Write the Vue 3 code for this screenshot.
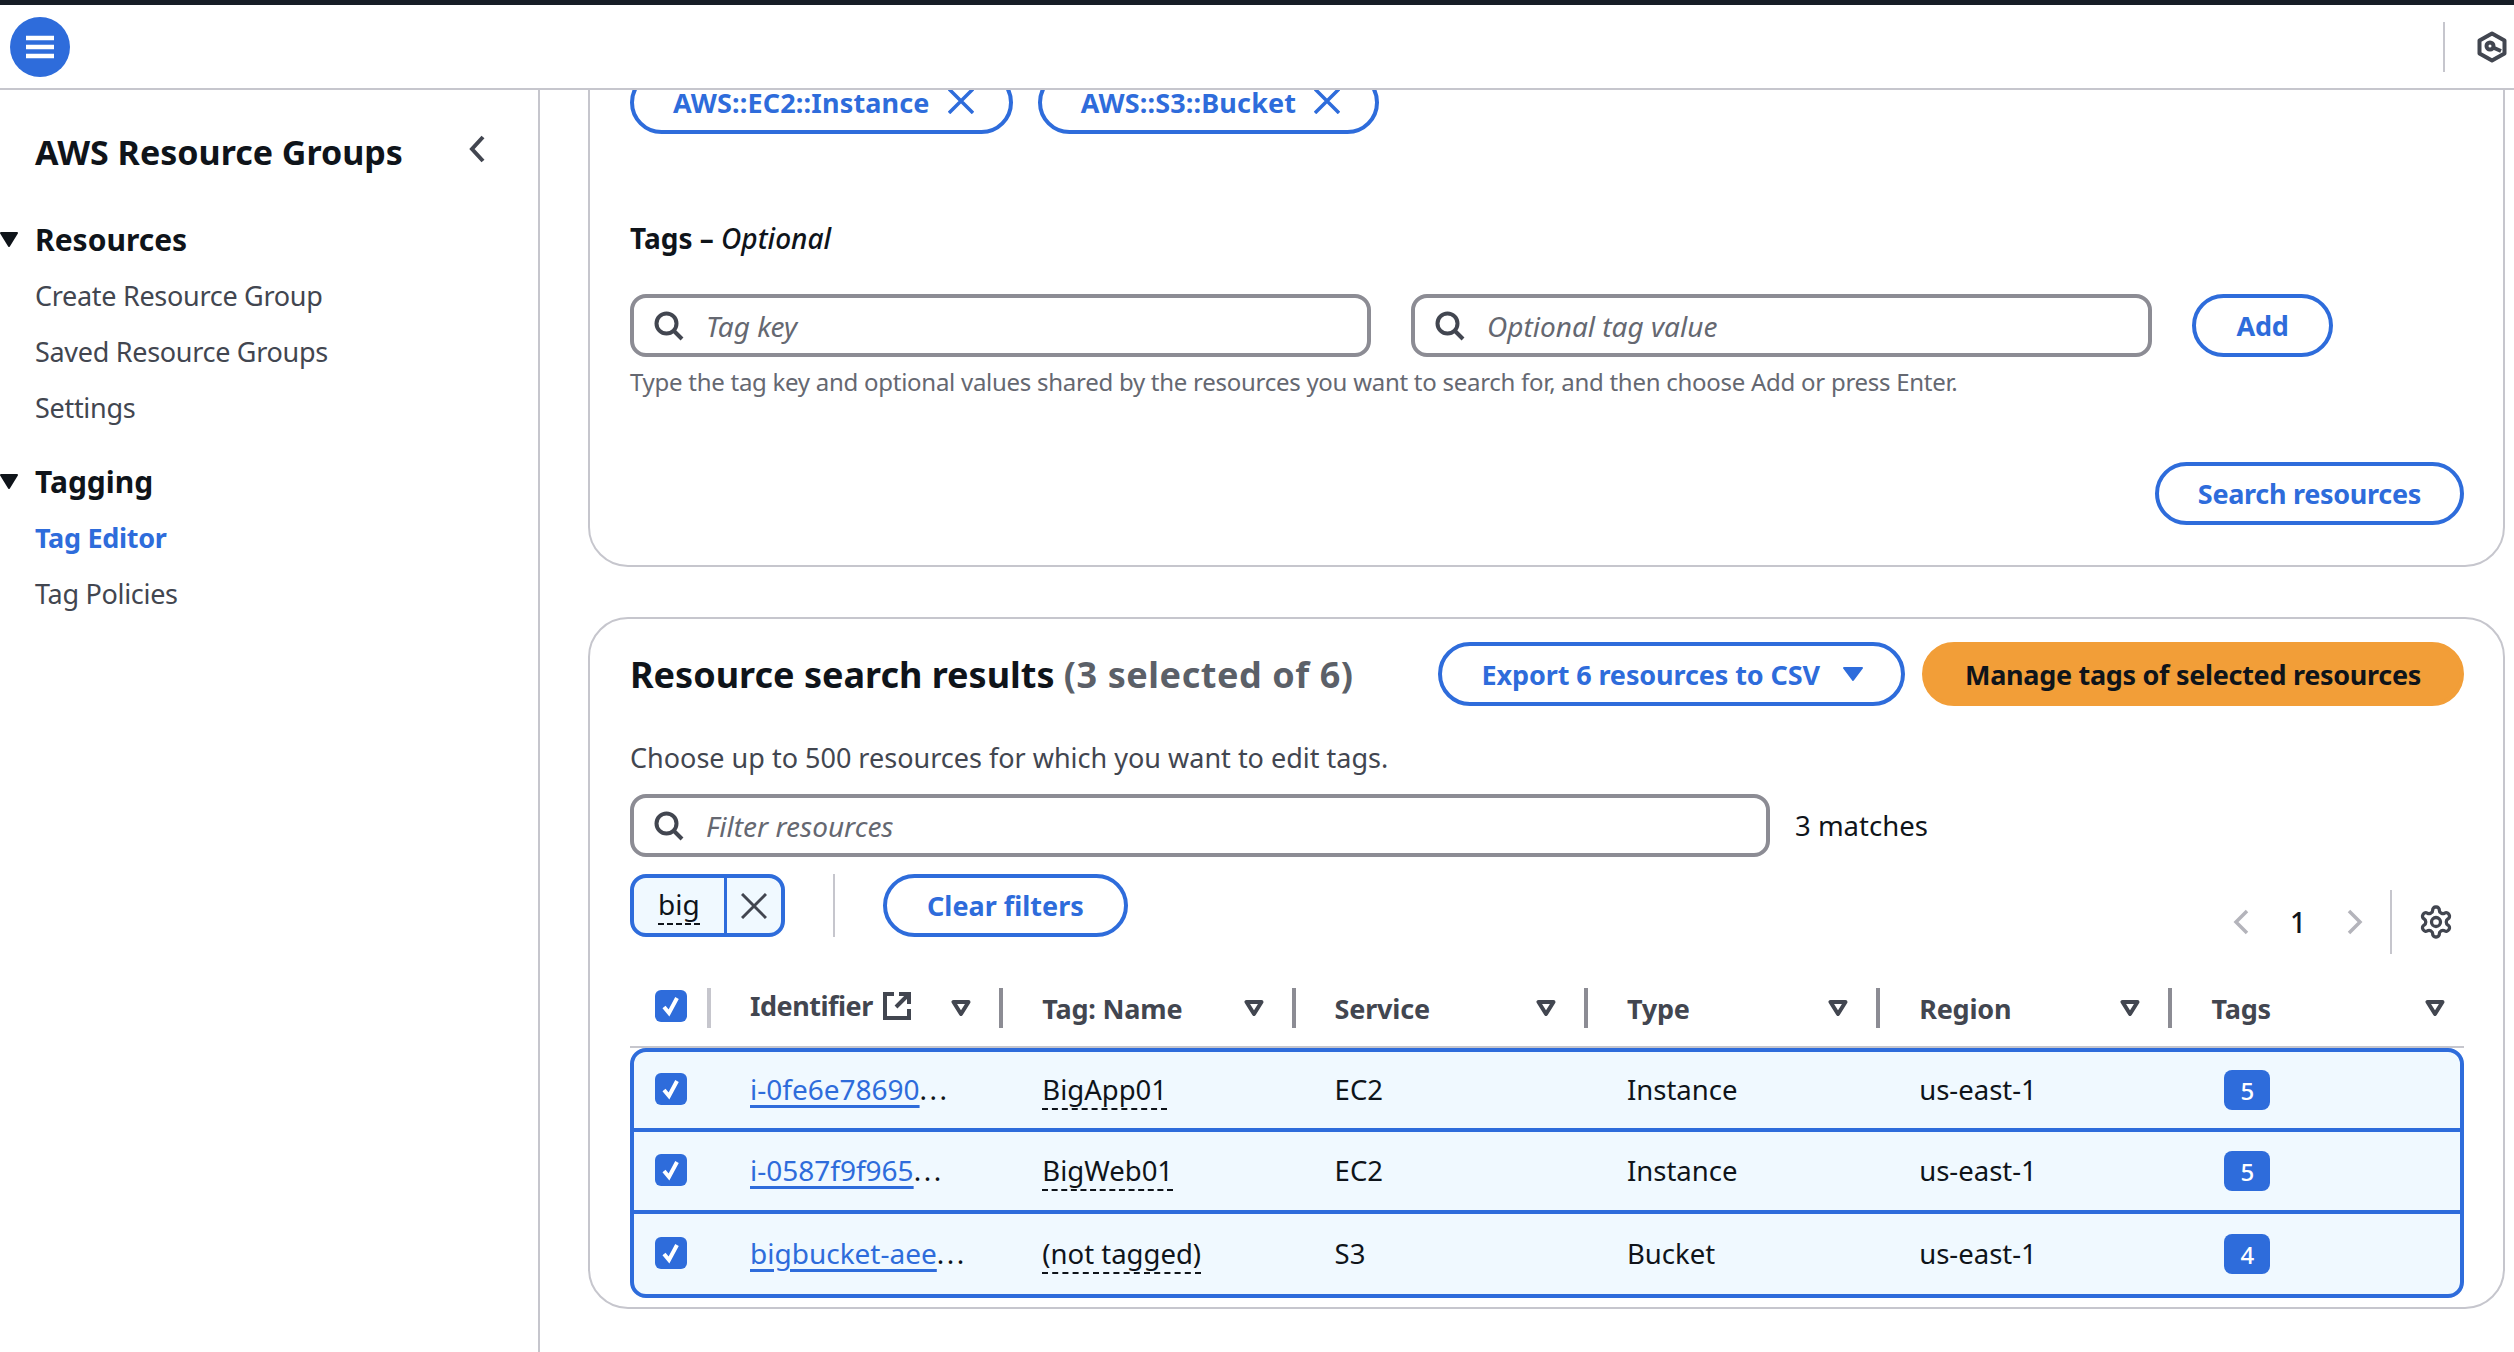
<script setup>
import { ref } from "vue";

const nav = ref([
  { title: "Resources", links: [{ label: "Create Resource Group" }, { label: "Saved Resource Groups" }, { label: "Settings" }] },
  { title: "Tagging", links: [{ label: "Tag Editor", active: true }, { label: "Tag Policies" }] },
]);

const columns = ["Tag: Name", "Service", "Type", "Region", "Tags"];

const rows = ref([
  { id: "i-0fe6e78690", name: "BigApp01", service: "EC2", type: "Instance", region: "us-east-1", tags: 5 },
  { id: "i-0587f9f965", name: "BigWeb01", service: "EC2", type: "Instance", region: "us-east-1", tags: 5 },
  { id: "bigbucket-aee", name: "(not tagged)", service: "S3", type: "Bucket", region: "us-east-1", tags: 4 },
]);
</script>

<template>
  <div class="app">
    <div class="topline"></div>
    <header class="header">
      <div class="menu-btn">
        <svg width="28" height="24" viewBox="0 0 28 24"><path d="M0 3h28M0 12h28M0 21h28" stroke="#fff" stroke-width="4.5" /></svg>
      </div>
      <div class="header-right">
        <svg width="30" height="32" viewBox="0 0 30 32" fill="none" stroke="#424650" stroke-width="4" stroke-linejoin="round">
          <path d="M15 2.500l12.500 7v13l-12.500 7-12.500-7v-13z" />
          <circle cx="13" cy="15" r="3.500" />
          <path d="M16 16.500l8 3.500" />
        </svg>
      </div>
    </header>

    <div class="body">
      <aside class="sidebar">
        <div class="side-title">
          <span>AWS Resource Groups</span>
          <svg class="side-close" width="18" height="28" viewBox="0 0 18 28" fill="none" stroke="#424650" stroke-width="4"><path d="M15 2L4 14l11 12" /></svg>
        </div>
        <div class="side-section" v-for="section in nav" :key="section.title">
          <div class="side-head">
            <svg width="18" height="15" viewBox="0 0 18 15"><path d="M1 1h16L9 14z" fill="#0f141a" stroke="#0f141a" stroke-width="2" stroke-linejoin="round" /></svg>
            <span>{{ section.title }}</span>
          </div>
          <div class="side-link" :class="{ active: link.active }" v-for="link in section.links" :key="link.label">{{ link.label }}</div>
        </div>
      </aside>

      <main class="content">
        <section class="card card-search">
          <div class="chips">
            <div class="btn chip">
              AWS::EC2::Instance
              <svg class="x" width="26" height="26" viewBox="0 0 26 26"><path d="M1 1l24 24M25 1L1 25" stroke="#2e6cdb" stroke-width="3.500" /></svg>
            </div>
            <div class="btn chip">
              AWS::S3::Bucket
              <svg class="x" width="26" height="26" viewBox="0 0 26 26"><path d="M1 1l24 24M25 1L1 25" stroke="#2e6cdb" stroke-width="3.500" /></svg>
            </div>
          </div>
          <div class="tags-label">Tags – <em>Optional</em></div>
          <div class="tag-inputs">
            <div class="input">
              <svg width="30" height="30" viewBox="0 0 30 30" fill="none" stroke="#424650" stroke-width="4"><circle cx="12.500" cy="12.500" r="10" /><path d="M19.500 19.500L28 28" /></svg>
              <span>Tag key</span>
            </div>
            <div class="input">
              <svg width="30" height="30" viewBox="0 0 30 30" fill="none" stroke="#424650" stroke-width="4"><circle cx="12.500" cy="12.500" r="10" /><path d="M19.500 19.500L28 28" /></svg>
              <span>Optional tag value</span>
            </div>
            <div class="btn add">Add</div>
          </div>
          <div class="hint">Type the tag key and optional values shared by the resources you want to search for, and then choose Add or press Enter.</div>
          <div class="search-row">
            <div class="btn">Search resources</div>
          </div>
        </section>

        <section class="card card-results">
          <div class="results-head">
            <h2>Resource search results <span>(3 selected of 6)</span></h2>
            <div class="head-actions">
              <div class="btn export">
                Export 6 resources to CSV
                <svg width="22" height="16" viewBox="0 0 22 16"><path d="M2 2h18L11 14z" fill="#2e6cdb" stroke="#2e6cdb" stroke-width="2" stroke-linejoin="round" /></svg>
              </div>
              <div class="btn primary">Manage tags of selected resources</div>
            </div>
          </div>
          <p class="desc">Choose up to 500 resources for which you want to edit tags.</p>
          <div class="filter-row">
            <div class="input filter">
              <svg width="30" height="30" viewBox="0 0 30 30" fill="none" stroke="#424650" stroke-width="4"><circle cx="12.500" cy="12.500" r="10" /><path d="M19.500 19.500L28 28" /></svg>
              <span>Filter resources</span>
            </div>
            <div class="matches">3 matches</div>
          </div>
          <div class="toolbar">
            <div class="token">
              <div class="token-text"><span>big</span></div>
              <div class="token-x">
                <svg width="26" height="26" viewBox="0 0 26 26"><path d="M1 1l24 24M25 1L1 25" stroke="#424650" stroke-width="3" /></svg>
              </div>
            </div>
            <div class="tool-sep"></div>
            <div class="btn clear">Clear filters</div>
            <div class="pager">
              <svg width="16" height="26" viewBox="0 0 16 26" fill="none" stroke="#b4b4bb" stroke-width="3.500"><path d="M14 2L3 13l11 11" /></svg>
              <span class="page-num">1</span>
              <svg width="16" height="26" viewBox="0 0 16 26" fill="none" stroke="#b4b4bb" stroke-width="3.500"><path d="M2 2l11 11L2 24" /></svg>
              <div class="pager-sep"></div>
              <svg width="36" height="36" viewBox="0 0 24 24" fill="none" stroke="#424650" stroke-width="2.200" stroke-linejoin="round">
                <path d="M12.220 2h-.44a2 2 0 0 0-2 2v.18a2 2 0 0 1-1 1.730l-.43.25a2 2 0 0 1-2 0l-.15-.08a2 2 0 0 0-2.730.73l-.22.38a2 2 0 0 0 .73 2.730l.15.1a2 2 0 0 1 1 1.720v.51a2 2 0 0 1-1 1.740l-.15.09a2 2 0 0 0-.73 2.730l.22.38a2 2 0 0 0 2.730.73l.15-.08a2 2 0 0 1 2 0l.43.25a2 2 0 0 1 1 1.730V20a2 2 0 0 0 2 2h.44a2 2 0 0 0 2-2v-.18a2 2 0 0 1 1-1.730l.43-.25a2 2 0 0 1 2 0l.15.08a2 2 0 0 0 2.730-.73l.22-.39a2 2 0 0 0-.73-2.730l-.15-.08a2 2 0 0 1-1-1.740v-.5a2 2 0 0 1 1-1.740l.15-.09a2 2 0 0 0 .73-2.730l-.22-.38a2 2 0 0 0-2.730-.73l-.15.08a2 2 0 0 1-2 0l-.43-.25a2 2 0 0 1-1-1.730V4a2 2 0 0 0-2-2z" />
                <circle cx="12" cy="12" r="3" />
              </svg>
            </div>
          </div>

          <div class="table-head">
            <div class="th-check">
              <div class="check">
                <svg width="20" height="22" viewBox="0 0 20 22" fill="none" stroke="#fff" stroke-width="4"><path d="M3 12l5 6 8-15" /></svg>
              </div>
            </div>
            <div class="th first">
              <span class="th-id">Identifier</span>
              <svg class="ext" width="28" height="28" viewBox="0 0 28 28" fill="none" stroke="#424650" stroke-width="4"><path d="M11 2H2v24h24v-9M16 2h10v10M26 2L13 15" /></svg>
              <svg class="sort" width="20" height="16" viewBox="0 0 20 16" fill="none" stroke="#424650" stroke-width="4" stroke-linejoin="round"><path d="M2.500 2h15L10 14z" /></svg>
            </div>
            <div class="th" v-for="col in columns" :key="col">
              <span>{{ col }}</span>
              <svg class="sort" width="20" height="16" viewBox="0 0 20 16" fill="none" stroke="#424650" stroke-width="4" stroke-linejoin="round"><path d="M2.500 2h15L10 14z" /></svg>
            </div>
          </div>

          <div class="table-body">
            <div class="row" v-for="row in rows" :key="row.id">
              <div class="td-check">
                <div class="check">
                  <svg width="20" height="22" viewBox="0 0 20 22" fill="none" stroke="#fff" stroke-width="4"><path d="M3 12l5 6 8-15" /></svg>
                </div>
              </div>
              <div class="td"><a class="link">{{ row.id }}</a><span class="dots">...</span></div>
              <div class="td small"><span class="dashed">{{ row.name }}</span></div>
              <div class="td small">{{ row.service }}</div>
              <div class="td small">{{ row.type }}</div>
              <div class="td small">{{ row.region }}</div>
              <div class="td td-badge"><span class="badge">{{ row.tags }}</span></div>
            </div>
          </div>
        </section>
      </main>
    </div>
  </div>
</template>

<style>
html, body {
  margin: 0;
  background: #fff;
  overflow: hidden;
}
</style>

<style scoped>
.app {
  width: 2514px;
  height: 1352px;
  overflow: hidden;
  display: flex;
  flex-direction: column;
  font-family: "Noto Sans", "Liberation Sans", sans-serif;
  font-size: 28px;
  color: #0f141a;
  background: #fff;
}
.topline {
  height: 5px;
  background: #161d26;
}
.header {
  height: 83px;
  padding: 1px 0 0 10px;
  box-sizing: content-box;
  border-bottom: 2px solid #c6c6cd;
  display: flex;
  align-items: center;
  justify-content: space-between;
  margin-top: -1px;
}
.menu-btn {
  width: 60px;
  height: 60px;
  border-radius: 50%;
  background: #2e6cdb;
  display: flex;
  align-items: center;
  justify-content: center;
}
.header-right {
  height: 50px;
  border-left: 2px solid #c6c6cd;
  display: flex;
  align-items: center;
  padding-left: 32px;
  margin-right: 7px;
}
.body {
  flex: 1;
  display: flex;
  min-height: 0;
}
.sidebar {
  width: 538px;
  flex: none;
  border-right: 2px solid #c6c6cd;
  padding-top: 39px;
}
.side-title {
  display: flex;
  align-items: center;
  justify-content: space-between;
  padding: 0 52px 0 35px;
  height: 46px;
  font-size: 34px;
  font-weight: 700;
}
.side-close {
  margin-top: -6px;
}
.side-section {
  margin-top: 25px;
}
.side-title + .side-section {
  margin-top: 44px;
}
.side-head {
  display: flex;
  align-items: center;
  gap: 17px;
  height: 40px;
  margin-bottom: 9px;
  font-size: 30px;
  font-weight: 700;
}
.side-link {
  height: 56px;
  line-height: 56px;
  padding-left: 35px;
  color: #424650;
  font-size: 27px;
  letter-spacing: -0.3px;
}
.side-link.active {
  color: #2e6cdb;
  font-weight: 700;
}
.content {
  flex: 1;
  min-width: 0;
  overflow: hidden;
  padding: 0 9px 0 48px;
}
.card {
  border: 2px solid #c6c6cd;
  border-radius: 40px;
  padding: 0 39px 0 40px;
}
.card-search {
  margin-top: -60px;
  padding-top: 39px;
  padding-bottom: 40px;
}
.btn {
  box-sizing: border-box;
  height: 63px;
  padding: 0 39px;
  border: 4px solid #2e6cdb;
  border-radius: 32px;
  color: #2e6cdb;
  font-size: 27px;
  letter-spacing: -0.3px;
  font-weight: 700;
  display: inline-flex;
  align-items: center;
  white-space: nowrap;
  gap: 20px;
}
.primary {
  background: #f29e38;
  border-color: #f29e38;
  color: #0f141a;
}
.export {
  letter-spacing: -0.1px;
  gap: 22px;
  padding-right: 37px;
}
.clear {
  letter-spacing: 0;
  padding: 0 40px;
}
.chips {
  display: flex;
  gap: 25px;
}
.chip {
  height: 63px;
  padding: 0 35px 1px 39px;
  letter-spacing: 0.15px;
  gap: 18px;
}
.x {
  margin-top: -2px;
}
.tags-label {
  margin-top: 86px;
  height: 36px;
  line-height: 36px;
  font-weight: 700;
}
.tags-label em {
  font-weight: 500;
}
.tag-inputs {
  display: flex;
  gap: 40px;
  margin-top: 38px;
}
.input {
  box-sizing: border-box;
  width: 741px;
  height: 63px;
  border: 4px solid #8c8c94;
  border-radius: 16px;
  padding-left: 20px;
  display: flex;
  align-items: center;
  gap: 22px;
  color: #656871;
  font-style: italic;
}
.add {
  width: 141px;
  padding: 0;
  justify-content: center;
}
.hint {
  margin-top: 10px;
  line-height: 30px;
  font-size: 24px;
  letter-spacing: -0.27px;
  color: #656871;
}
.search-row {
  display: flex;
  justify-content: flex-end;
  margin-top: 65px;
}
.card-results {
  margin-top: 50px;
  padding-top: 23px;
  padding-bottom: 9px;
}
.results-head {
  display: flex;
  align-items: center;
  justify-content: space-between;
}
.results-head h2 {
  margin: 0;
  font-size: 36px;
  font-weight: 700;
  white-space: nowrap;
}
.results-head h2 span {
  color: #5b6068;
  letter-spacing: 0.55px;
}
.head-actions {
  display: flex;
  gap: 17px;
}
.head-actions .btn {
  height: 64px;
}
.desc {
  margin: 32px 0 0;
  line-height: 40px;
  font-size: 27px;
  color: #424650;
}
.filter-row {
  display: flex;
  align-items: center;
  gap: 25px;
  margin-top: 16px;
}
.filter {
  width: 1140px;
}
.matches {
  color: #0f141a;
  font-size: 27.500px;
}
.toolbar {
  display: flex;
  align-items: flex-start;
  margin-top: 17px;
}
.token {
  box-sizing: border-box;
  width: 155px;
  height: 63px;
  border: 4px solid #2e6cdb;
  border-radius: 16px;
  background: #f0f9ff;
  display: flex;
  overflow: hidden;
}
.token-text {
  width: 90px;
  padding-left: 24px;
  box-sizing: border-box;
  line-height: 52px;
}
.token-text span,
.dashed {
  border-bottom: 2px dashed #0f141a;
}
.token-x {
  flex: 1;
  border-left: 3px solid #2e6cdb;
  display: flex;
  align-items: center;
  justify-content: center;
}
.tool-sep {
  width: 2px;
  height: 63px;
  background: #c6c6cd;
  margin: 0 48px;
}
.pager {
  margin: 16px 10px 0 auto;
  height: 64px;
  display: flex;
  align-items: center;
}
.page-num {
  width: 98px;
  text-align: center;
  font-weight: 500;
}
.pager-sep {
  width: 2px;
  height: 64px;
  background: #c6c6cd;
  margin: 0 26px 0 27px;
}
.table-head {
  display: grid;
  grid-template-columns: 77px repeat(5, 292.300px) 295px;
  height: 60px;
  margin-top: 34px;
  border-bottom: 2px solid #c6c6cd;
  box-sizing: border-box;
}
.th-check {
  padding: 2px 0 0 25px;
}
.check {
  width: 32px;
  height: 32px;
  border-radius: 6px;
  background: #2e6cdb;
  display: flex;
  align-items: center;
  justify-content: center;
}
.th {
  height: 40px;
  box-sizing: border-box;
  border-left: 4px solid #8c8c94;
  padding: 0 28px 0 39px;
  display: flex;
  align-items: center;
  font-size: 27px;
  letter-spacing: -0.2px;
  font-weight: 700;
  color: #424650;
  white-space: nowrap;
}
.th.first {
  border-left-color: #c6c6cd;
}
.th:last-child {
  padding-right: 18px;
}
.th-id {
  margin-bottom: 6px;
  letter-spacing: -0.5px;
}
.ext {
  margin: -4px 0 0 10px;
}
.sort {
  margin-left: auto;
}
.table-body {
  border: 4px solid #2e6cdb;
  border-radius: 16px;
  overflow: hidden;
  background: #f0f9ff;
}
.row {
  display: grid;
  grid-template-columns: 74px repeat(6, 292.300px);
  height: 78px;
  align-items: center;
}
.row:first-child {
  height: 76px;
}
.row:last-child {
  height: 80px;
}
.row + .row {
  border-top: 4px solid #2e6cdb;
}
.td-check {
  padding: 0 0 3px 21px;
}
.td {
  padding: 0 0 2px 42px;
  white-space: nowrap;
}
.td.small {
  font-size: 27.500px;
}
.td-badge {
  padding-bottom: 0;
}
.link {
  color: #2e6cdb;
  text-decoration: underline;
  text-decoration-thickness: 3px;
  text-underline-offset: 5px;
}
.dots {
  letter-spacing: 2.500px;
}
.badge {
  display: inline-flex;
  align-items: center;
  justify-content: center;
  width: 46px;
  height: 40px;
  margin-left: 13px;
  border-radius: 8px;
  background: #2e6cdb;
  color: #fff;
  font-size: 24px;
  font-weight: 500;
}
</style>
